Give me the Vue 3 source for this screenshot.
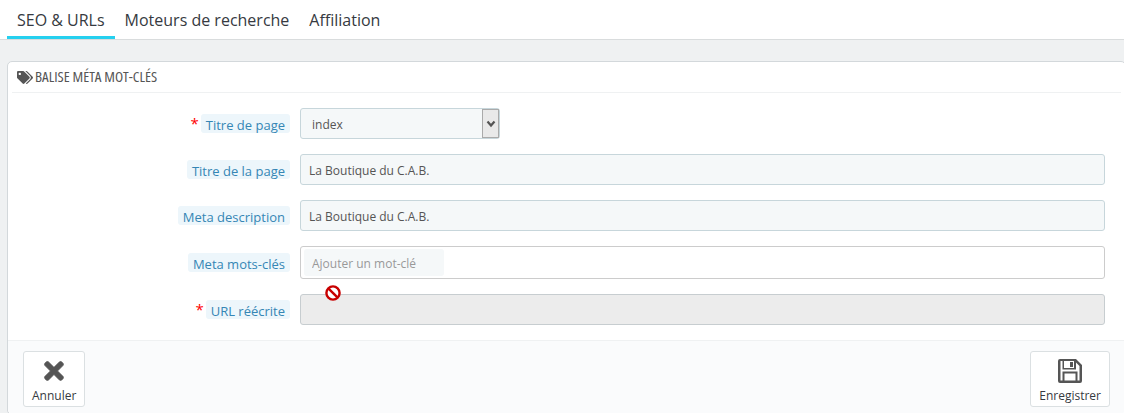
<template>
  <div class="page">

    <!-- TABS -->
    <div class="tabs">
      <a
        v-for="(tab, i) in tabs"
        :key="tab"
        class="tab"
        :class="{ active: i === 0 }"
      >
        {{ tab }}
      </a>
    </div>

    <div class="panel">

      <div class="panel-heading">
        <svg class="tag-icon" viewBox="0 0 640 512">
          <path fill="#555" d="M497.941 225.941L286.059 14.059A48 48 0 0 0 252.118 0H48C21.49 0 0 21.49 0 48v204.118a48 48 0 0 0 14.059 33.941l211.882 211.882c18.744 18.745 49.136 18.746 67.882 0l204.118-204.118c18.745-18.745 18.745-49.137 0-67.882zM112 160c-26.51 0-48-21.49-48-48s21.49-48 48-48 48 21.49 48 48-21.49 48-48 48zm513.941 133.823L421.823 497.941c-18.745 18.745-49.137 18.745-67.882 0l-.36-.36L527.64 323.522c16.999-16.999 26.36-39.6 26.36-63.64s-9.362-46.641-26.36-63.64L331.397 0h48.721a48 48 0 0 1 33.941 14.059l211.882 211.882c18.745 18.745 18.745 49.137 0 67.882z" />
        </svg>
        <span class="heading-text">BALISE MÉTA MOT-CLÉS</span>
      </div>

      <!-- FORM -->
      <div class="form">

        <div class="form-row">
          <div class="label-col">
            <span class="req">*</span>
            <span class="label">Titre de page</span>
          </div>
          <div class="select-wrap">
            <select class="select">
              <option>index</option>
            </select>
            <span class="select-arrow">
              <svg viewBox="0 0 10 8" width="10" height="8">
                <path d="M1.5 1.5 L5 5.5 L8.5 1.5" fill="none" stroke="#555" stroke-width="2.2" />
              </svg>
            </span>
          </div>
        </div>

        <div class="form-row">
          <div class="label-col">
            <span class="label">Titre de la page</span>
          </div>
          <input class="input" type="text" value="La Boutique du C.A.B." />
        </div>

        <div class="form-row">
          <div class="label-col">
            <span class="label">Meta description</span>
          </div>
          <input class="input" type="text" value="La Boutique du C.A.B." />
        </div>

        <div class="form-row">
          <div class="label-col">
            <span class="label">Meta mots-clés</span>
          </div>
          <div class="tags-box">
            <input class="tag-input" type="text" placeholder="Ajouter un mot-clé" />
          </div>
        </div>

        <div class="form-row">
          <div class="label-col">
            <span class="req">*</span>
            <span class="label">URL réécrite</span>
          </div>
          <div class="disabled-wrap">
            <input class="input disabled" type="text" disabled />
            <svg class="ban-cursor" viewBox="0 0 18 18">
              <circle cx="9" cy="9" r="6.6" fill="#fff" stroke="#c80000" stroke-width="2.4" />
              <path d="M4.6 4.6 L13.4 13.4" stroke="#c80000" stroke-width="2.4" />
            </svg>
          </div>
        </div>

      </div>

      <!-- FOOTER -->
      <div class="panel-footer">
        <button class="btn">
          <svg class="btn-icon" viewBox="-46 34 445 445">
            <path fill="#555" stroke="#555" stroke-width="14" d="M242.72 256l100.07-100.07c12.28-12.28 12.28-32.19 0-44.48l-22.24-22.24c-12.28-12.28-32.19-12.28-44.48 0L176 189.28 75.93 89.21c-12.28-12.28-32.19-12.28-44.48 0L9.21 111.45c-12.28 12.28-12.28 32.19 0 44.48L109.28 256 9.21 356.07c-12.28 12.28-12.28 32.19 0 44.48l22.24 22.24c12.28 12.28 32.2 12.28 44.48 0L176 322.72l100.07 100.07c12.28 12.28 32.2 12.28 44.48 0l22.24-22.24c12.28-12.28 12.28-32.19 0-44.48L242.72 256z" />
          </svg>
          Annuler
        </button>
        <button class="btn">
          <svg class="btn-icon" viewBox="0 0 24 24">
            <path fill="#555" fill-rule="evenodd" d="M2 0H18L24 6V22A2 2 0 0 1 22 24H2A2 2 0 0 1 0 22V2A2 2 0 0 1 2 0ZM6 2V9H16V2ZM12 3H15V8H12ZM2.5 2V21.5H4.5V12.5H19.5V21.5H21.5V7L18 3.500V10.500H4.500V2ZM6.500 14.500V21.500H17.500V14.500Z" />
          </svg>
          Enregistrer
        </button>
      </div>

    </div>

  </div>
</template>

<script setup>
const tabs = ['SEO & URLs', 'Moteurs de recherche', 'Affiliation']
</script>

<style scoped>

.page {
  height: 413px;
  overflow: hidden;
  background: #eff1f2;
  font-family: "Open Sans", sans-serif;
  font-size: 12px;
  color: #555;
}

.tabs {
  display: flex;
  height: 39px;
  padding-left: 7px;
  background: #fff;
  border-bottom: 1px solid #d9dcdd;
}

.tab {
  height: 39px;
  box-sizing: border-box;
  padding: 10px 10px 0;
  font-size: 16px;
  line-height: 21px;
  color: #363a41;
}

.tab.active {
  border-bottom: 3px solid #25d0ef;
}

/* runs past the window on the right and bottom, as in the screenshot */
.panel {
  margin: 21px -2px 0 7px;
  background: #fff;
  border: 1px solid #d3d8db;
  border-radius: 5px;
  box-sizing: border-box;
  height: 354px;
  display: flex;
  flex-direction: column;
}

.panel-heading {
  display: flex;
  align-items: center;
  gap: 2px;
  height: 30px;
  margin: 0 4px;
  padding-left: 5px;
  border-bottom: 1px solid #eff1f2;
}

.tag-icon {
  width: 16px;
  height: 13px;
}

.heading-text {
  font-size: 15px;
  font-stretch: 75%;
  color: #555;
  margin-bottom: 2px;
}

.form {
  padding: 15px 0;
  display: flex;
  flex-direction: column;
  gap: 15px;
}

.form-row {
  display: flex;
  align-items: center;
}

.label-col {
  width: 282px;
  flex-shrink: 0;
  display: flex;
  justify-content: flex-end;
  align-items: center;
  gap: 2px;
  margin-right: 10px;
}

.req {
  color: #f00;
  font-size: 15px;
  line-height: 15px;
}

.label {
  box-sizing: border-box;
  height: 19px;
  background: #edf6fb;
  color: #3586b5;
  font-size: 13px;
  line-height: 20px;
  padding: 1px 5px 0;
  border-radius: 3px;
}

.select-wrap {
  position: relative;
  width: 200px;
  height: 31px;
}

.select {
  width: 100%;
  height: 100%;
  appearance: none;
  background: #f5f8f9;
  border: 1px solid #c7d6db;
  border-radius: 3px;
  padding: 2px 0 0 11px;
  font-family: inherit;
  font-size: 12px;
  color: #555;
}

.select-arrow {
  position: absolute;
  top: 1px;
  right: 1px;
  width: 17px;
  height: 29px;
  display: flex;
  align-items: center;
  justify-content: center;
  background: #e9e9e9;
  border: 1px solid #aaa;
  box-sizing: border-box;
}

.input {
  width: 805px;
  height: 31px;
  box-sizing: border-box;
  background: #f5f8f9;
  border: 1px solid #c7d6db;
  border-radius: 3px;
  padding: 2px 8px 0;
  font-family: inherit;
  font-size: 12px;
  color: #555;
}

.tags-box {
  width: 805px;
  height: 33px;
  box-sizing: border-box;
  background: #fff;
  border: 1px solid #ccc;
  border-radius: 3px;
  padding: 2px 3px;
}

.tag-input {
  width: 140px;
  height: 100%;
  box-sizing: border-box;
  background: #f5f8f9;
  border: none;
  border-radius: 3px;
  padding: 2px 8px 0;
  font-family: inherit;
  font-size: 12px;
}

.tag-input::placeholder {
  color: #999;
}

.disabled-wrap {
  position: relative;
}

.input.disabled {
  display: block;
  background: #ececec;
  border-color: #c7cdd0;
}

.ban-cursor {
  position: absolute;
  left: 24px;
  top: -10px;
  width: 18px;
  height: 18px;
}

.panel-footer {
  flex: 1;
  box-sizing: border-box;
  display: flex;
  justify-content: space-between;
  padding: 10px 15px 0;
  background: #fafbfc;
  border-top: 1px solid #eff1f2;
  border-radius: 0 0 5px 5px;
}

.btn {
  height: 56px;
  padding: 0 8px 2px;
  display: flex;
  flex-direction: column;
  align-items: center;
  justify-content: flex-end;
  gap: 4px;
  background: #fff;
  border: 1px solid #dbe0e2;
  border-radius: 3px;
  font-family: inherit;
  font-size: 12px;
  color: #363a41;
}

.btn-icon {
  height: 24px;
  width: 24px;
}

</style>

<style>
html,
body {
  margin: 0;
  background: #eff1f2;
}
</style>
